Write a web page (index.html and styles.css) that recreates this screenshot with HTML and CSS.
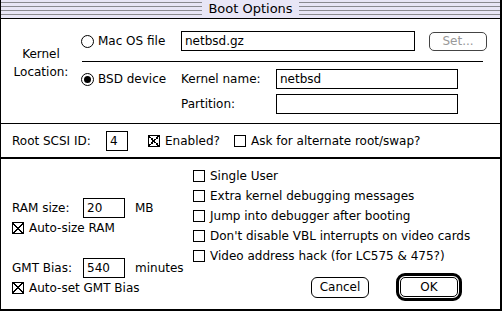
FILE: index.html
```html
<!DOCTYPE html>
<html lang="en">
<head>
    <meta charset="UTF-8">
    <title>Boot Options</title>
    <link rel="stylesheet" href="styles.css">
</head>
<body>
    <div class="window">
        <div class="titlebar"><span class="title">Boot Options</span></div>

        <!-- Kernel location -->
        <div class="kernel">
            <div class="kernel-label">Kernel<br>Location:</div>
            <div class="kernel-opts">
                <div class="row-mac">
                    <label class="radio"><span class="circle"></span>Mac OS file</label>
                    <div class="field field-file">netbsd.gz</div>
                    <button class="btn btn-set">Set...</button>
                </div>
                <div class="rule"></div>
                <div class="bsd">
                    <label class="radio"><span class="circle on"></span>BSD device</label>
                    <div class="bsd-fields">
                        <div class="frow"><span class="flabel">Kernel name:</span><div class="field field-name">netbsd</div></div>
                        <div class="frow"><span class="flabel">Partition:</span><div class="field field-name"></div></div>
                    </div>
                </div>
            </div>
        </div>

        <!-- Root device -->
        <div class="root">
            <span class="root-label">Root SCSI ID:</span>
            <div class="field field-id">4</div>
            <label class="check check-enabled"><span class="box on"></span>Enabled?</label>
            <label class="check"><span class="box"></span>Ask for alternate root/swap?</label>
        </div>

        <!-- Options -->
        <div class="opts">
            <div class="opts-left">
                <div class="vrow"><span class="vlabel">RAM size:</span><div class="field field-num">20</div><span>MB</span></div>
                <label class="check crow"><span class="box on"></span>Auto-size RAM</label>
                <div class="vrow vrow-gmt"><span class="vlabel">GMT Bias:</span><div class="field field-num">540</div><span>minutes</span></div>
                <label class="check crow"><span class="box on"></span>Auto-set GMT Bias</label>
            </div>
            <div class="opts-right">
                <label class="check crow"><span class="box"></span>Single User</label>
                <label class="check crow"><span class="box"></span>Extra kernel debugging messages</label>
                <label class="check crow"><span class="box"></span>Jump into debugger after booting</label>
                <label class="check crow"><span class="box"></span>Don't disable VBL interrupts on video cards</label>
                <label class="check crow"><span class="box"></span>Video address hack (for LC575 &amp; 475?)</label>
                <div class="buttons">
                    <button class="btn btn-cancel">Cancel</button>
                    <div class="ok-ring"><button class="btn btn-ok">OK</button></div>
                </div>
            </div>
        </div>
    </div>
</body>
</html>
```

FILE: styles.css
```css
body {
    margin: 0;
    font-family: "DejaVu Sans", sans-serif;
    font-size: 12px;
    color: #000;
    background-color: #ffffff;
}

.window {
    width: 499px;
    height: 309px;
    border-left: 1px solid #000;
    border-right: 2px solid #000;
    border-bottom: 2px solid #000;
    background-color: #ffffff;
    overflow: hidden;
}

/* barra de titulo con rayas */
.titlebar {
    height: 18px;
    border-bottom: 1px solid #000;
    background: repeating-linear-gradient(to bottom, #e8e6f6 0, #e8e6f6 2px, #8a8a90 2px, #8a8a90 3px, #e8e6f6 3px, #e8e6f6 4px);
    background-size: 100% 16px;
    background-repeat: no-repeat;
    background-color: #e8e6f6;
    display: flex;
    justify-content: center;
    align-items: center;
}
.title {
    background-color: #e8e6f6;
    padding: 0 6px;
    font-size: 13px;
    line-height: 18px;
}

.field {
    border: 1px solid #000;
    height: 18px;
    line-height: 18px;
    padding-left: 3px;
    box-sizing: content-box;
    background-color: #fff;
}

.radio, .check {
    display: flex;
    align-items: center;
    white-space: nowrap;
}
.circle {
    width: 11px;
    height: 11px;
    border: 1px solid #000;
    border-radius: 50%;
    margin-right: 4px;
    display: flex;
    align-items: center;
    justify-content: center;
}
.circle.on::after {
    content: '';
    width: 7px;
    height: 7px;
    border-radius: 50%;
    background-color: #000;
}
.box {
    flex: none;
    width: 10px;
    height: 10px;
    border: 1px solid #000;
    margin-right: 5px;
}
.box.on {
    background:
        linear-gradient(45deg, transparent 45%, #000 45%, #000 55%, transparent 55%),
        linear-gradient(-45deg, transparent 45%, #000 45%, #000 55%, transparent 55%);
}

.btn {
    font-family: inherit;
    font-size: 12px;
    background-color: #fff;
    border: 1px solid #000;
    border-radius: 5px;
    padding: 0;
    color: #000;
}

/* seccion kernel */
.kernel {
    display: flex;
    height: 104px;
    border-bottom: 1px solid #000;
}
.kernel-label {
    width: 80px;
    text-align: center;
    line-height: 18px;
    padding-top: 26px;
}
.kernel-opts {
    flex: 1;
    padding-top: 12px;
}
.row-mac {
    display: flex;
    align-items: center;
}
.radio {
    width: 100px;
}
.field-file {
    width: 229px;
}
.btn-set {
    width: 58px;
    height: 19px;
    margin-left: 14px;
    color: #999;
    border-color: #444;
}
.rule {
    width: 401px;
    height: 1px;
    margin-top: 10px;
    margin-left: 1px;
    background-color: #000;
}
.bsd {
    display: flex;
    margin-top: 7px;
}
.bsd .radio {
    height: 20px;
    align-self: flex-start;
}
.frow {
    display: flex;
    align-items: center;
    margin-bottom: 5px;
}
.flabel {
    width: 95px;
}
.field-name {
    width: 177px;
}

/* seccion root */
.root {
    display: flex;
    align-items: center;
    height: 33px;
    padding-left: 11px;
    border-bottom: 2px solid #000;
}
.root-label {
    width: 94px;
}
.field-id {
    width: 17px;
}
.check-enabled {
    width: 86px;
    margin-left: 20px;
}

/* opciones */
.opts {
    display: flex;
}
.opts-left {
    width: 181px;
    padding-left: 11px;
    padding-top: 39px;
}
.vrow {
    display: flex;
    align-items: center;
}
.vlabel {
    width: 71px;
}
.field-num {
    width: 37px;
    margin-right: 10px;
}
.crow {
    height: 20px;
}
.vrow-gmt {
    margin-top: 20px;
}
.opts-right {
    padding-top: 7px;
}
.buttons {
    display: flex;
    align-items: center;
    margin-top: 7px;
    padding-left: 118px;
}
.btn-cancel {
    width: 58px;
    height: 21px;
    border-radius: 6px;
}
.ok-ring {
    margin-left: 27px;
    border: 3px solid #000;
    border-radius: 9px;
    padding: 1px;
}
.btn-ok {
    width: 58px;
    height: 20px;
    display: block;
}
```
